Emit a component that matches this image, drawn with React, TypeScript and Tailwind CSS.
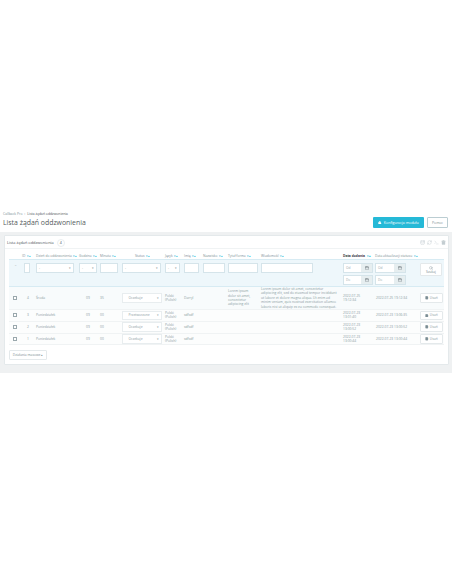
import { Calendar, Database, FileText, Lock, RefreshCw, Search, Terminal, Trash2 } from 'lucide-react';

const rows = [
  { id: 4, day: 'Środa', hour: '09', min: '35', status: 'Oczekuje', name: 'Darryl', title: 'Lorem ipsum dolor sit amet, consectetur adipiscing elit', msg: 'Lorem ipsum dolor sit amet, consectetur adipiscing elit, sed do eiusmod tempor incididunt ut labore et dolore magna aliqua. Ut enim ad minim veniam, quis nostrud exercitation ullamco laboris nisi ut aliquip ex ea commodo consequat.', added: '2022-07-25 19:12:34', updated: '2022-07-25 19:12:34' },
  { id: 3, day: 'Poniedziałek', hour: '09', min: '00', status: 'Przetworzone', name: 'sdfsdf', title: '', msg: '', added: '2022-07-23 13:01:40', updated: '2022-07-23 13:06:35' },
  { id: 2, day: 'Poniedziałek', hour: '09', min: '00', status: 'Oczekuje', name: 'sdfsdf', title: '', msg: '', added: '2022-07-23 13:00:52', updated: '2022-07-23 13:00:52' },
  { id: 1, day: 'Poniedziałek', hour: '09', min: '00', status: 'Oczekuje', name: 'sdfsdf', title: '', msg: '', added: '2022-07-23 13:00:44', updated: '2022-07-23 13:00:44' },
];

function Sort() {
  return <span className="ml-[1.5px] text-[#25b9d7] text-[2.6px]">▾▴</span>;
}

function Head({ children, center, bold }: { children: string; center?: boolean; bold?: boolean }) {
  return (
    <th className={`pl-[2px] pt-[3px] text-[3.3px] leading-[4px] whitespace-nowrap ${center ? 'text-center' : 'text-left'} ${bold ? 'font-bold text-[#363a41]' : 'font-normal text-[#7d8f95]'}`}>
      {children}
      <Sort />
    </th>
  );
}

function Field({ select }: { select?: boolean }) {
  return (
    <div className="h-[10px] w-full flex items-center justify-between px-[2px] bg-white border-[0.5px] border-[#d5e4ea] text-[3.3px] text-[#7d8f95]">
      {select && <span>-</span>}
      {select && <span className="text-[3px]">▾</span>}
    </div>
  );
}

function DateField({ label, width }: { label: string; width: string }) {
  return (
    <div className={`flex h-[9.5px] ${width} border-[0.5px] border-[#d5e4ea] bg-white`}>
      <span className="flex-1 pl-[2px] text-[3.2px] leading-[8.5px] text-[#9aa8ad]">{label}</span>
      <span className="w-[11px] flex items-center justify-center bg-[#e6eef0]">
        <Calendar className="w-[4px] h-[4px] text-[#5f6a6f]" />
      </span>
    </div>
  );
}

export default function App() {
  return (
    <div className="min-h-[584px] bg-white font-['Open_Sans',sans-serif] text-[#363a41] antialiased">
      <div className="h-[232px] flex flex-col justify-end pl-[3px] pr-[4px] pb-[4px]">
        <div className="h-[4px] text-[3.4px] leading-[4px] text-[#7d8f95]">
          Callback Pro <span className="mx-[1px]">›</span> <span className="text-[#4c5257]">Lista żądań oddzwonienia</span>
        </div>
        <div className="flex items-center justify-between mt-[1px] h-[11px]">
          <div className="pt-[2px] text-[6.9px] leading-none text-[#555b60]">Lista żądań oddzwonienia</div>
          <div className="flex items-center gap-[3px]">
            <div className="flex items-center gap-[2px] h-[11px] w-[51px] justify-center bg-[#25b9d7] rounded-[1px] text-white text-[3.6px]">
              <Lock className="w-[3.5px] h-[3.5px]" fill="white" />
              Konfiguracja modułu
            </div>
            <div className="h-[11px] w-[21px] flex items-center justify-center border-[0.5px] border-[#bbcdd2] rounded-[1px] text-[#7d8f95] text-[3.4px]">
              Pomoc
            </div>
          </div>
        </div>
      </div>
      <div className="h-[141px] bg-[#eff1f2] pt-[3px] pl-[4px] pr-[3px]">
        <div className="h-[130px] bg-white border-[0.5px] border-[#e4e9eb] rounded-[1px]">
          <div className="h-[13px] flex items-center justify-between pl-[2px] pr-[2px] pt-[1px] border-b-[0.5px] border-[#f0f3f4]">
            <div className="flex items-center gap-[3px] text-[3.9px] text-[#4c5257]">
              Lista żądań oddzwonienia
              <span className="w-[8px] h-[8px] rounded-full border-[0.5px] border-[#eaeef0] flex items-center justify-center text-[3.6px]">4</span>
            </div>
            <div className="flex items-center gap-[2px] text-[#c3cdd0]">
              <Database className="w-[5px] h-[5px]" />
              <RefreshCw className="w-[5px] h-[5px]" />
              <Terminal className="w-[5px] h-[5px]" />
              <Trash2 className="w-[5px] h-[5px]" fill="#c3cdd0" />
            </div>
          </div>
          <table className="ml-[4px] w-[435px] table-fixed border-collapse">
            <colgroup>
              <col className="w-[13px]" />
              <col className="w-[12px]" />
              <col className="w-[43px]" />
              <col className="w-[21px]" />
              <col className="w-[22px]" />
              <col className="w-[43px]" />
              <col className="w-[19px]" />
              <col className="w-[19px]" />
              <col className="w-[25px]" />
              <col className="w-[33px]" />
              <col className="w-[82px]" />
              <col className="w-[33px]" />
              <col className="w-[44px]" />
              <col className="w-[26px]" />
            </colgroup>
            <thead>
              <tr className="h-[10.5px]">
                <th />
                <th className="pt-[3px] text-left text-[3.3px] leading-[4px] font-normal text-[#7d8f95] whitespace-nowrap">
                  ID
                  <Sort />
                </th>
                <Head>Dzień do oddzwonienia</Head>
                <Head>Godzina</Head>
                <Head>Minuta</Head>
                <Head center>Status</Head>
                <Head>Język</Head>
                <Head>Imię</Head>
                <Head>Nazwisko</Head>
                <Head>Tytuł forma</Head>
                <Head>Wiadomość</Head>
                <Head bold>Data dodania</Head>
                <th className="pl-[1px] pt-[3px] text-left text-[3.3px] leading-[4px] font-normal text-[#7d8f95] whitespace-nowrap">
                  Data aktualizacji statusu
                  <Sort />
                </th>
                <th />
              </tr>
            </thead>
            <tbody>
              <tr className="h-[27px] bg-[#eef7fb] border-y-[0.5px] border-[#d7ebf3] align-top">
                <td className="text-center text-[3.4px] leading-[4px] pt-[3px] text-[#7d8f95]">–</td>
                <td className="pl-[2px] pr-[4.7px] pt-[3px]"><Field /></td>
                <td className="pl-[2px] pr-[3px] pt-[3px]"><Field select /></td>
                <td className="pl-[2px] pr-[1px] pt-[3px]"><Field select /></td>
                <td className="pl-[2px] pr-[2px] pt-[3px]"><Field /></td>
                <td className="pl-[2px] pr-[2px] pt-[3px]"><Field select /></td>
                <td className="pl-[2px] pr-[2px] pt-[3px]"><Field select /></td>
                <td className="pl-[2px] pr-[2px] pt-[3px]"><Field /></td>
                <td className="pl-[2px] pr-[1px] pt-[3px]"><Field /></td>
                <td className="pl-[2px] pr-[1px] pt-[3px]"><Field /></td>
                <td className="pl-[2px] pr-[28px] pt-[3px]"><Field /></td>
                <td className="pl-[2px] pt-[3px]">
                  <div className="flex flex-col gap-[2.5px]">
                    <DateField label="Od" width="w-[30px]" />
                    <DateField label="Do" width="w-[30px]" />
                  </div>
                </td>
                <td className="pl-[1px] pt-[3px]">
                  <div className="flex flex-col gap-[2.5px]">
                    <DateField label="Od" width="w-[31px]" />
                    <DateField label="Do" width="w-[31px]" />
                  </div>
                </td>
                <td className="pl-[2px] pt-[3px]">
                  <div className="h-[13px] w-[22px] flex flex-col items-center justify-center bg-white border-[0.5px] border-[#e4e9eb] rounded-[1px] text-[3.3px] leading-[4px] text-[#7d8f95]">
                    <Search className="w-[4px] h-[4px]" />
                    Szukaj
                  </div>
                </td>
              </tr>
              {rows.map((row, i) => (
                <tr key={row.id} className={`${i === 0 ? 'h-[22.5px]' : 'h-[11.75px]'} ${i === 0 ? 'bg-[#f8fbfc]' : 'bg-[#fcfdfd]'} border-b-[0.5px] border-[#f0f3f4] text-[3.3px] text-[#8a9ba1] leading-[4.4px]`}>
                  <td className="pl-[4px]">
                    <span className="block w-[4px] h-[4px] border-[0.5px] border-[#9aa8ad] bg-white" />
                  </td>
                  <td className="pl-[5px]">{row.id}</td>
                  <td className="pl-[2px]">{row.day}</td>
                  <td className="pl-[9px]">{row.hour}</td>
                  <td className="pl-[2px]">{row.min}</td>
                  <td className="pl-[2px] pr-[1px]">
                    <div className="h-[9.5px] flex items-center justify-between pl-[5.5px] pr-[2px] bg-white border-[0.5px] border-[#e8edef] text-[3.3px]">
                      {row.status}
                      <span className="text-[3px]">▾</span>
                    </div>
                  </td>
                  <td className="pl-[2px]">Polski (Polish)</td>
                  <td className="pl-[2px]" colSpan={2}>{row.name}</td>
                  <td className="pl-[2px] pr-[2px]">{row.title}</td>
                  <td className="pl-[2px] pr-[2px]">{row.msg}</td>
                  <td className="pl-[2px] pr-[12px]">{row.added}</td>
                  <td className="pl-[2px] whitespace-nowrap">{row.updated}</td>
                  <td className="pl-[2px]">
                    <div className="h-[9.5px] w-[23px] flex items-center justify-center gap-[1px] bg-white border-[0.5px] border-[#e4e9eb] rounded-[1px] text-[3.3px]">
                      <FileText className="w-[3.5px] h-[3.5px] text-[#7d8f95]" fill="#7d8f95" />
                      Usuń
                    </div>
                  </td>
                </tr>
              ))}
            </tbody>
          </table>
          <div className="mt-[5px] ml-[4px] h-[10px] w-[38px] flex items-center justify-center border-[0.5px] border-[#e4e9eb] rounded-[1px] text-[3.3px] text-[#7d8f95]">
            Działania masowe ▴
          </div>
        </div>
      </div>
    </div>
  );
}
